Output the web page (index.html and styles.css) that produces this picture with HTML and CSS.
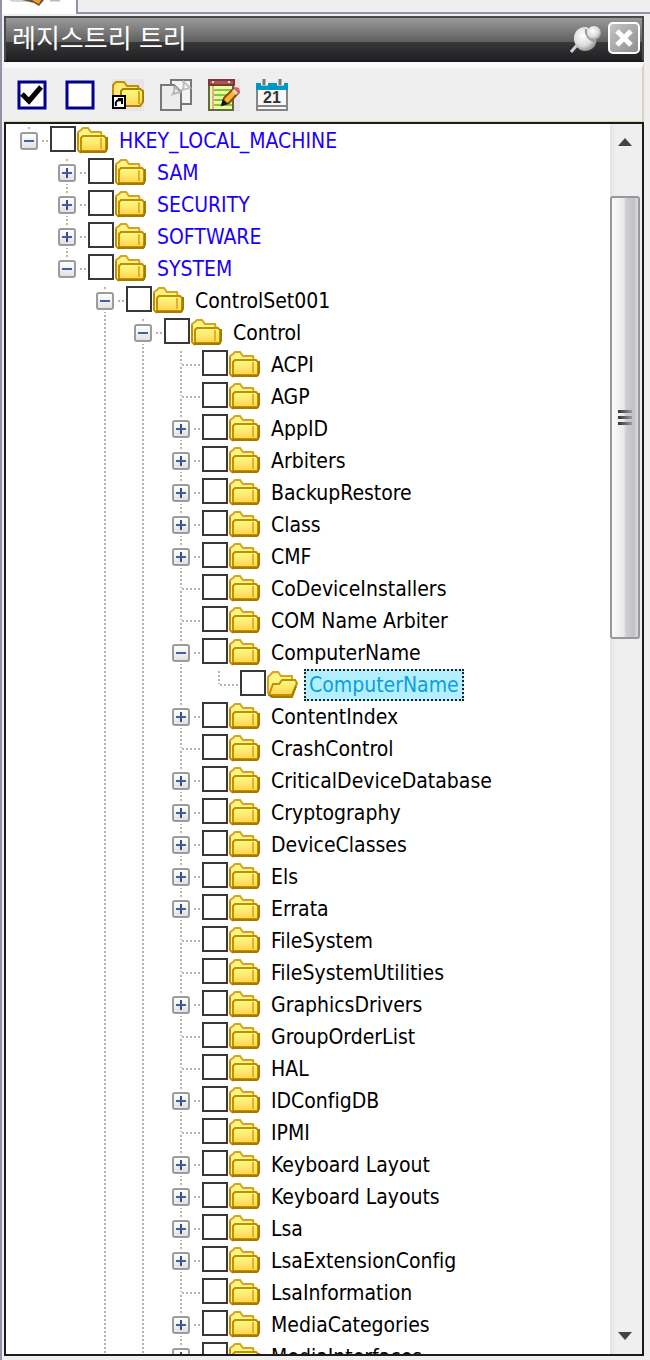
FILE: index.html
```html
<!DOCTYPE html>
<html lang="ko">
<head>
    <meta charset="UTF-8">
    <meta name="viewport" content="width=device-width, initial-scale=1.0">
    <title>레지스트리 트리</title>
    <link rel="stylesheet" href="styles.css">
</head>
<body>
    <svg class="symbols" aria-hidden="true">
        <defs>
            <linearGradient id="gold" x1="0" y1="0" x2="0" y2="1">
                <stop offset="0" stop-color="#fffb86"/>
                <stop offset="1" stop-color="#ffd552"/>
            </linearGradient>
            <radialGradient id="steel" cx="0.4" cy="0.35" r="0.7">
                <stop offset="0" stop-color="#ffffff"/>
                <stop offset="0.6" stop-color="#dcdcdc"/>
                <stop offset="1" stop-color="#8c8c8c"/>
            </radialGradient>
            <symbol id="folder" viewBox="0 0 32 32">
                <path d="M2 26V9l3-2 2-2h5l3 4h10l1 5" fill="#fff484" stroke="#d3a51c" stroke-width="2"/>
                <path d="M2 10v17l3 3" fill="none" stroke="#c18f00" stroke-width="2"/>
                <path d="M5 28V15l2-2h21l2 2v13z" fill="url(#gold)" stroke="#c18f00" stroke-width="2"/>
                <path d="M25 15v11" stroke="#e5b023" stroke-width="2"/>
                <path d="M4 29h25l2-3V14" fill="none" stroke="#a97a00" stroke-width="2"/>
            </symbol>
            <symbol id="folder-open" viewBox="0 0 32 32">
                <path d="M2 27V10l3-3 2-2h5l3 4h11v5" fill="#fff484" stroke="#d3a51c" stroke-width="2"/>
                <path d="M3 28l4-11h6l3-4h13l2 3-5 12z" fill="url(#gold)" stroke="#c18f00" stroke-width="2"/>
                <path d="M3 28l3 2h20l4-11" fill="none" stroke="#a97a00" stroke-width="2"/>
            </symbol>
        </defs>
    </svg>

    <div class="tabs">
        <div class="tab">
            <svg viewBox="0 0 72 12" aria-hidden="true">
                <path d="M7 0h14l6 2H10z" fill="#d5d5d5"/>
                <path d="M20 0h22l-5 6-5-3z" fill="#6e5238"/>
                <path d="M30 0h9l-2 4-4-2z" fill="#f39a2d"/>
                <path d="M48 0h10" stroke="#b9b9c4" stroke-width="3"/>
            </svg>
        </div>
        <div class="tab-rest"></div>
    </div>

    <main class="panel">
        <header class="titlebar">
            <h1>레지스트리 트리</h1>
            <button type="button" class="pin" aria-label="고정">
                <svg viewBox="0 0 32 32">
                    <path d="M1 30l7-8" stroke="#d0d0d0" stroke-width="3"/>
                    <path d="M4 18C3 10 9 4 17 5l9 11c2 7-4 13-11 13C9 29 5 24 4 18z" fill="url(#steel)"/>
                    <path d="M16 7c-1 6 3 11 9 12" fill="none" stroke="#999" stroke-width="2"/>
                    <circle cx="24" cy="11" r="7" fill="url(#steel)"/>
                </svg>
            </button>
            <button type="button" class="close" aria-label="닫기">
                <svg viewBox="0 0 28 28"><path d="M7 7l14 14M21 7L7 21" stroke="#fff" stroke-width="5"/></svg>
            </button>
        </header>

        <div class="toolbar">
            <button type="button" id="checkAll" aria-label="모두 선택">
                <svg viewBox="0 0 32 32">
                    <rect x="3" y="3" width="26" height="26" fill="#fff" stroke="#00008b" stroke-width="3"/>
                    <path d="M6 15l7 7L25 8" fill="none" stroke="#000" stroke-width="5"/>
                </svg>
            </button>
            <button type="button" id="uncheckAll" aria-label="모두 해제">
                <svg viewBox="0 0 32 32">
                    <rect x="3" y="3" width="26" height="26" fill="#fff" stroke="#00008b" stroke-width="3"/>
                </svg>
            </button>
            <button type="button" aria-label="바로 가기">
                <svg viewBox="0 0 32 32">
                    <rect width="32" height="32" fill="#e8e4e7"/>
                    <path d="M1 24V6l3-3h8l3 4h11l1 5" fill="#ffe87a" stroke="#c18f00" stroke-width="2"/>
                    <path d="M9 26V12l2-2h17l3 2v11l-3 4H9z" fill="url(#gold)" stroke="#b07f00" stroke-width="2"/>
                    <path d="M27 12v13" stroke="#dba41a" stroke-width="2"/>
                    <rect x="1" y="17" width="12" height="12" fill="#fff" stroke="#000" stroke-width="2"/>
                    <path d="M4 27c-1-5 1-6 5-6M6 20h4v5" fill="none" stroke="#000" stroke-width="2"/>
                </svg>
            </button>
            <button type="button" aria-label="복사">
                <svg viewBox="0 0 32 32">
                    <path d="M11 1h20v24H11z" fill="#f4f4f4" stroke="#777" stroke-width="2"/>
                    <path d="M23 2l7 7-8 2c3-3 2-6 1-9z" fill="#fff" stroke="#c0c0c0" stroke-width="2"/>
                    <path d="M1 6h13l7 7v18H1z" fill="#ececec" stroke="#777" stroke-width="2"/>
                    <path d="M14 7l6 6-7 2c2-3 2-5 1-8z" fill="#fff" stroke="#b5b5b5" stroke-width="2"/>
                </svg>
            </button>
            <button type="button" aria-label="편집">
                <svg viewBox="0 0 32 32">
                    <rect width="32" height="32" fill="#e8e4e7"/>
                    <rect x="1" y="2" width="24" height="29" fill="#eaff9c" stroke="#5e6b3c" stroke-width="2"/>
                    <path d="M6 11h18M6 16h18M6 21h18M6 26h18" stroke="#7fc843" stroke-width="2"/>
                    <path d="M5 6v24" stroke="#f0a39b" stroke-width="2"/>
                    <rect x="1" y="1" width="25" height="5" fill="#a85555" stroke="#7c3838" stroke-width="2"/>
                    <path d="M4 3h2M20 3h2" stroke="#f0d4d4" stroke-width="2"/>
                    <path d="M14 26l2-7 10-10 5 4-10 11z" fill="#ffb52e" stroke="#8a4b12" stroke-width="2"/>
                    <path d="M24 12l3-3 4 4-3 3z" fill="#d8d8d8"/>
                    <path d="M26 10l2-2 3 1 1 4-2 1z" fill="#e06060"/>
                    <path d="M13 27l2-7 5 5z" fill="#111"/>
                </svg>
            </button>
            <button type="button" aria-label="날짜">
                <svg viewBox="0 0 32 32">
                    <rect x="1" y="5" width="30" height="26" fill="#f8f8f8" stroke="#858585" stroke-width="2"/>
                    <path d="M0 27h32" stroke="#858585" stroke-width="2"/>
                    <rect y="4" width="32" height="7" fill="#0098c8"/>
                    <path d="M5 5h7M21 5h7" stroke="#fff" stroke-width="3"/>
                    <path d="M8 0v6M24 0v6" stroke="#777" stroke-width="3"/>
                    <text x="16" y="24" text-anchor="middle">21</text>
                </svg>
            </button>
        </div>

        <div class="tree-box">
            <ul class="tree" id="tree"></ul>
            <div class="scrollbar">
                <button type="button" aria-label="위로"><svg viewBox="0 0 14 8"><path d="M0 8l7-8 7 8z" fill="#444"/></svg></button>
                <div class="track">
                    <div class="thumb"><span></span><span></span><span></span></div>
                </div>
                <button type="button" aria-label="아래로"><svg viewBox="0 0 14 8"><path d="M0 0h14L7 8z" fill="#444"/></svg></button>
            </div>
        </div>
    </main>
    <script src="script.js"></script>
</body>
</html>
```
FILE: styles.css
```css
* {
    box-sizing: border-box;
}
body {
    margin: 0;
    height: 100vh;
    display: flex;
    flex-direction: column;
    overflow: hidden;
    background: #efefef;
    border-left: 2px solid #8f94a3;
    font-family: "DejaVu Sans Condensed", "DejaVu Sans", sans-serif;
    font-size: 21px;
}
button {
    padding: 0;
    border: none;
    background: none;
    cursor: pointer;
}
button svg {
    display: block;
    width: 100%;
    height: 100%;
}
.symbols {
    position: absolute;
    width: 0;
    height: 0;
}

/* tabs */
.tabs {
    display: flex;
    flex: none;
    height: 14px;
    background: #fff;
}
.tab {
    width: 74px;
}
.tab svg {
    display: block;
    height: 12px;
}
.tab-rest {
    flex: 1;
    background: #efefef;
    border-left: 2px solid #8f94a3;
    border-bottom: 2px solid #8f94a3;
}

/* panel */
.panel {
    flex: 1;
    min-height: 0;
    display: flex;
    flex-direction: column;
    padding: 2px 6px 4px 2px;
}
.titlebar {
    flex: none;
    display: flex;
    align-items: center;
    gap: 6px;
    height: 46px;
    padding: 2px 2px 4px 6px;
    border: 2px solid #4a4a4c;
    border-bottom-color: #1c1c1e;
    background: linear-gradient(#9a9a9a, #606060 56%, #38383a 57%, #202022);
}
.titlebar h1 {
    flex: 1;
    margin: 0;
    padding-bottom: 2px;
    color: #fff;
    font-family: "Noto Sans CJK KR", sans-serif;
    font-size: 26px;
    font-weight: 400;
    line-height: 34px;
}
.pin {
    width: 32px;
    height: 32px;
}
.close {
    width: 32px;
    height: 32px;
    border: 2px solid #fff;
    border-radius: 5px;
    background: linear-gradient(135deg, #c4c4c4, #8f8f8f);
}
.toolbar {
    flex: none;
    display: flex;
    align-items: center;
    gap: 16px;
    height: 60px;
    padding: 0 12px;
    border-top: 6px solid #fafafa;
    border-right: 2px solid #dcd2b8;
    border-bottom: 1px solid #dcd2b8;
}
.toolbar button {
    width: 32px;
    height: 32px;
}
.toolbar text {
    fill: #333;
    font: bold 16px "Liberation Sans", sans-serif;
}

/* tree */
.tree-box {
    flex: 1;
    min-height: 0;
    display: flex;
    border: 2px solid #1b1b1b;
    background: #fff;
}
.tree {
    flex: 1;
    min-width: 0;
    margin: 0;
    padding: 1px 0 0 14px;
    overflow: hidden;
    list-style: none;
}
.tree ul {
    margin: 0;
    padding-left: 38px;
    list-style: none;
}
.tree li {
    background: repeating-linear-gradient(#fff 0 2px, #b4b4b4 2px 4px) 8px 0 / 2px 100% no-repeat;
}
.tree li.last {
    background-size: 2px 16px;
}
.row {
    display: flex;
    align-items: center;
    height: 32px;
    background: repeating-linear-gradient(90deg, #fff 0 2px, #b4b4b4 2px 4px) 8px 15px / 22px 2px no-repeat;
}
.toggle {
    flex: none;
    width: 18px;
    height: 18px;
    margin-right: 12px;
    border: 2px solid #9b9b9b;
    border-radius: 3px;
    background:
        linear-gradient(#3f5fae, #3f5fae) center / 10px 2px no-repeat,
        linear-gradient(#fff, #e2e2e2);
    box-shadow: 0 0 0 2px #fff;
}
.toggle.closed {
    background:
        linear-gradient(#3f5fae, #3f5fae) center / 10px 2px no-repeat,
        linear-gradient(#2f4f9e, #2f4f9e) center / 2px 10px no-repeat,
        linear-gradient(#fff, #e2e2e2);
}
.no-toggle {
    flex: none;
    width: 30px;
}
.row input {
    appearance: none;
    flex: none;
    width: 26px;
    height: 26px;
    margin: 0 0 4px;
    border: 2px solid #383838;
    background: #fff;
}
.row input:checked {
    background: radial-gradient(#000 45%, #fff 50%);
}
.row svg {
    flex: none;
    width: 32px;
    height: 32px;
    margin-bottom: 4px;
}
.row label {
    margin-left: 6px;
    padding: 0 3px;
    border: 2px dotted transparent;
    line-height: 28px;
    white-space: nowrap;
    font-variant-ligatures: none;
}
.row.hive label {
    color: #1a00ff;
}
.row.selected label {
    border-color: #222;
    background: #b3efff;
    color: #0a9fdc;
}

/* scrollbar */
.scrollbar {
    flex: none;
    display: flex;
    flex-direction: column;
    width: 32px;
    padding-right: 2px;
    background: linear-gradient(90deg, #e4e4e4, #efefef 20%);
}
.scrollbar button {
    flex: none;
    display: flex;
    justify-content: center;
    align-items: center;
    height: 36px;
}
.scrollbar button svg {
    width: 14px;
    height: 8px;
}
.track {
    flex: 1;
    padding-top: 36px;
}
.thumb {
    display: flex;
    flex-direction: column;
    justify-content: center;
    align-items: center;
    gap: 3px;
    height: 39.5%;
    border: 2px solid #989898;
    border-radius: 3px;
    background: linear-gradient(90deg, #fafafa, #e9e9ec 45%, #cdcdd1 55%, #c2c2c6 85%, #dedede);
}
.thumb span {
    width: 14px;
    height: 3px;
    background: linear-gradient(90deg, #333, #999);
}
```
FILE: script.js
```js
// [name, children]: 'closed' = collapsed, array = expanded, nothing = leaf
var control = [
    ['ACPI'],
    ['AGP'],
    ['AppID', 'closed'],
    ['Arbiters', 'closed'],
    ['BackupRestore', 'closed'],
    ['Class', 'closed'],
    ['CMF', 'closed'],
    ['CoDeviceInstallers'],
    ['COM Name Arbiter'],
    ['ComputerName', [['ComputerName']]],
    ['ContentIndex', 'closed'],
    ['CrashControl'],
    ['CriticalDeviceDatabase', 'closed'],
    ['Cryptography', 'closed'],
    ['DeviceClasses', 'closed'],
    ['Els', 'closed'],
    ['Errata', 'closed'],
    ['FileSystem'],
    ['FileSystemUtilities'],
    ['GraphicsDrivers', 'closed'],
    ['GroupOrderList'],
    ['HAL'],
    ['IDConfigDB', 'closed'],
    ['IPMI'],
    ['Keyboard Layout', 'closed'],
    ['Keyboard Layouts', 'closed'],
    ['Lsa', 'closed'],
    ['LsaExtensionConfig', 'closed'],
    ['LsaInformation'],
    ['MediaCategories', 'closed'],
    ['MediaInterfaces', 'closed']
];

var registry = [
    ['HKEY_LOCAL_MACHINE', [
        ['SAM', 'closed'],
        ['SECURITY', 'closed'],
        ['SOFTWARE', 'closed'],
        ['SYSTEM', [
            ['ControlSet001', [
                ['Control', control]
            ]]
        ]]
    ]]
];

var count = 0;

function addNodes(list, nodes, level) {
    nodes.forEach(function (node, i) {
        var open = Array.isArray(node[1]);
        var selected = level === 5;
        var id = 'key' + count++;

        var li = document.createElement('li');
        // ControlSet001 and Control have more keys further down
        if (i === nodes.length - 1 && (level < 2 || level === 5)) {
            li.className = 'last';
        }

        var row = document.createElement('div');
        row.className = 'row' + (level < 2 ? ' hive' : '') + (selected ? ' selected' : '');
        row.innerHTML =
            (node[1]
                ? '<button type="button" class="toggle' + (open ? '' : ' closed') + '" aria-label="' + node[0] + '"></button>'
                : '<span class="no-toggle"></span>') +
            '<input type="checkbox" id="' + id + '">' +
            '<svg aria-hidden="true"><use href="#folder' + (selected ? '-open' : '') + '"/></svg>' +
            '<label for="' + id + '">' + node[0] + '</label>';
        li.appendChild(row);

        if (open) {
            var ul = document.createElement('ul');
            addNodes(ul, node[1], level + 1);
            li.appendChild(ul);
            row.querySelector('.toggle').addEventListener('click', function () {
                ul.hidden = !ul.hidden;
                this.classList.toggle('closed', ul.hidden);
            });
        }
        list.appendChild(li);
    });
}

function setAll(checked) {
    document.querySelectorAll('#tree input').forEach(function (box) {
        box.checked = checked;
    });
}

addNodes(document.getElementById('tree'), registry, 0);
document.getElementById('checkAll').addEventListener('click', function () { setAll(true); });
document.getElementById('uncheckAll').addEventListener('click', function () { setAll(false); });
```
